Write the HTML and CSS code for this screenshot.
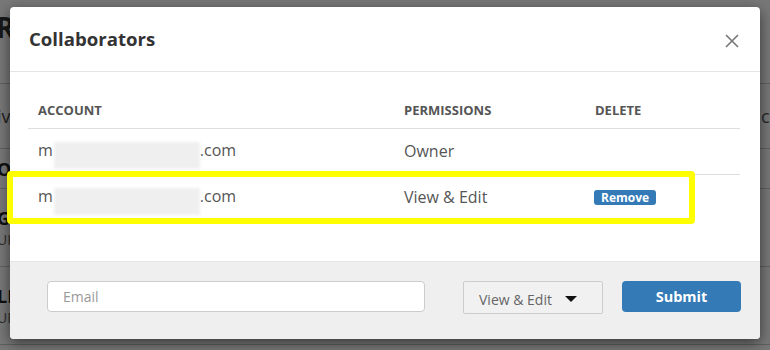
FILE: index.html
```html
<!DOCTYPE html>
<html lang="en">
<head>
    <meta charset="UTF-8">
    <meta name="viewport" content="width=device-width, initial-scale=1.0">
    <title>Collaborators</title>
    <link rel="stylesheet" href="styles.css">
</head>
<body>
    <!-- page behind the dialog -->
    <div class="page">
        <div class="page-head"><span class="page-title">R</span></div>
        <div class="page-row tall">
            <span class="cut">iv</span>
            <span class="search">ch</span>
        </div>
        <div class="page-row short"><span class="cut strong">ON</span></div>
        <div class="page-row taller">
            <span class="cut strong">G</span>
            <span class="cut small">UP</span>
        </div>
        <div class="page-row taller">
            <span class="cut strong">LE</span>
            <span class="cut small">UP</span>
        </div>
    </div>

    <div class="overlay">
        <div class="modal">
            <div class="modal-header">
                <h4 class="modal-title">Collaborators</h4>
                <button class="close" title="Close">
                    <svg width="14" height="14" viewBox="0 0 14 14"><path d="M1 1L13 13M13 1L1 13" stroke="#7a7a7a" stroke-width="1.7" fill="none"/></svg>
                </button>
            </div>
            <div class="modal-body">
                <table class="table">
                    <thead>
                        <tr>
                            <th class="col-account">Account</th>
                            <th class="col-perm">Permissions</th>
                            <th>Delete</th>
                        </tr>
                    </thead>
                    <tbody>
                        <tr>
                            <td>m<span class="blur"></span>.com</td>
                            <td>Owner</td>
                            <td></td>
                        </tr>
                        <tr>
                            <td>m<span class="blur"></span>.com</td>
                            <td>View &amp; Edit</td>
                            <td><span class="label">Remove</span></td>
                        </tr>
                    </tbody>
                </table>
            </div>
            <div class="modal-footer">
                <input class="email" type="text" placeholder="Email">
                <div class="select">View &amp; Edit <span class="caret"></span></div>
                <button class="submit">Submit</button>
            </div>
        </div>
        <div class="highlight"></div>
    </div>
</body>
</html>
```

FILE: styles.css
```css
body {
    margin: 0;
    font-family: "Open Sans", Arial, sans-serif;
    background: #fff;
    color: #333;
    overflow: hidden;
}
.page {
    height: 350px;
}
.page-head {
    height: 75px;
    border-bottom: 1px solid #ccc;
}
.page-title {
    display: block;
    margin: 8px 0 0 -4px;
    font-size: 28px;
    font-weight: bold;
}
.page-row {
    height: 64px;
    border-bottom: 1px solid #ccc;
    display: flex;
    flex-direction: column;
    justify-content: center;
    position: relative;
}
.page-row.short {
    height: 39px;
}
.page-row.taller {
    height: 77px;
}
.cut {
    margin-left: -3px;
    font-size: 18px;
    color: #444;
}
.cut.strong {
    font-weight: bold;
    color: #222;
}
.cut.small {
    font-size: 14px;
    color: #666;
}
.search {
    position: absolute;
    left: 761px;
    top: 20px;
    font-size: 18px;
    color: #555;
}
.overlay {
    position: absolute;
    left: 0;
    top: 0;
    width: 770px;
    height: 350px;
    background: rgba(0, 0, 0, 0.53);
}
.modal {
    margin: 7px 0 0 10px;
    width: 750px;
    height: 332px;
    background: #fff;
    border-radius: 4px;
    box-shadow: 0 4px 14px rgba(0, 0, 0, 0.55);
    display: flex;
    flex-direction: column;
    overflow: hidden;
}
.modal-header {
    height: 64px;
    border-bottom: 1px solid #e5e5e5;
    padding: 0 21px 0 19px;
    display: flex;
    align-items: center;
    justify-content: space-between;
}
.modal-title {
    margin: 0 0 2px 0;
    font-size: 18.6px;
    font-weight: bold;
    color: #333;
}
.close {
    background: none;
    border: none;
    padding: 0;
    margin-top: 4px;
    width: 14px;
    height: 14px;
    cursor: pointer;
}
.close svg {
    display: block;
}
.modal-body {
    flex: 1;
    padding: 21px 20px 0 18px;
}
.table {
    width: 100%;
    border-collapse: collapse;
}
.table th {
    text-align: left;
    text-transform: uppercase;
    font-size: 13px;
    font-weight: bold;
    color: #555;
    line-height: 20px;
    padding: 7px 10px 8px;
    border-bottom: 1px solid #ddd;
}
.col-account {
    width: 346px;
}
.col-perm {
    width: 171px;
}
.table td {
    font-size: 16px;
    color: #555;
    line-height: 22px;
    padding: 10px 10px 11px;
    border-bottom: 1px solid #ddd;
    white-space: nowrap;
}
.table tr:last-child td {
    border-bottom: none;
}
.blur {
    display: inline-block;
    width: 146px;
    height: 27px;
    margin: -6px 0 -6px 1px;
    vertical-align: -7px;
    background: #efefef;
    filter: blur(1.5px);
}
.label {
    display: inline-block;
    background: #337ab7;
    color: #fff;
    font-size: 12px;
    font-weight: bold;
    line-height: 15px;
    padding: 0 7px;
    border-radius: 3px;
    vertical-align: 1px;
    margin-left: -1px;
}
.modal-footer {
    height: 58px;
    background: #efefef;
    border-top: 1px solid #e5e5e5;
    padding: 19px 19px 0 37px;
    display: flex;
    align-items: flex-start;
}
.email {
    width: 378px;
    height: 31px;
    box-sizing: border-box;
    border: 1px solid #ccc;
    border-radius: 4px;
    padding: 0 15px;
    font-family: "Open Sans", Arial, sans-serif;
    font-size: 14px;
    background: #fff;
}
.email::placeholder {
    color: #999;
}
.select {
    margin-left: 38px;
    width: 140px;
    height: 33px;
    box-sizing: border-box;
    border: 1px solid #ccc;
    border-radius: 2px;
    background: #f1f1f1;
    padding: 3px 0 0 15px;
    font-size: 14px;
    color: #666;
    display: flex;
    align-items: center;
}
.caret {
    display: inline-block;
    margin-left: 13px;
    width: 0;
    height: 0;
    border-left: 6px solid transparent;
    border-right: 6px solid transparent;
    border-top: 6px solid #111;
}
.submit {
    margin-left: 19px;
    width: 119px;
    height: 31px;
    border: none;
    border-radius: 4px;
    background: #337ab7;
    color: #fff;
    font-family: "Open Sans", Arial, sans-serif;
    font-size: 14.5px;
    font-weight: bold;
    cursor: pointer;
}
.highlight {
    position: absolute;
    left: 7px;
    top: 171px;
    width: 676px;
    height: 41px;
    border: 6px solid #ffff00;
    border-radius: 4px;
}
```
